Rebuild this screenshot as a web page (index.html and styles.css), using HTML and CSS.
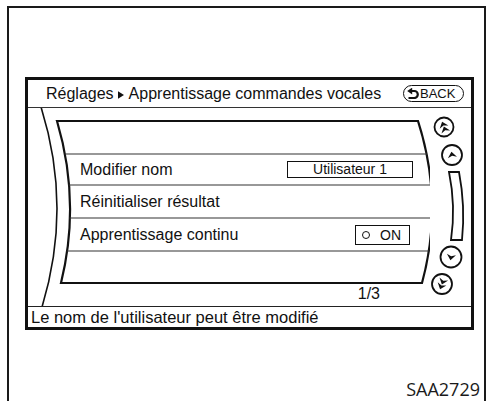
FILE: index.html
```html
<!DOCTYPE html>
<html lang="fr">
<head>
<meta charset="utf-8">
<title>Réglages</title>
<link rel="stylesheet" href="styles.css">
</head>
<body>
<div class="frame">
  <div class="screen">
    <div class="header">
      <div class="title">Réglages<svg class="tri" width="6" height="8" viewBox="0 0 6 8"><path d="M0 0.3 L6 4 L0 7.7 Z"/></svg>Apprentissage commandes vocales</div>
      <div class="back">
        <svg class="back-icon" width="12" height="11" viewBox="0 0 12 11"><path d="M0.2 3 L5.2 -0.4 L5.2 6.4 Z" fill="#111"/><path d="M4 3 H7.3 A3.5 3.5 0 0 1 7.3 10 H1.5" stroke="#111" stroke-width="2.2" fill="none"/></svg>
        <span>BACK</span>
      </div>
    </div>
    <div class="body">
      <div class="panel">
        <svg class="panel-lines" width="402" height="198" viewBox="0 0 402 198">
          <path d="M13 -1 Q44.5 99 14 199" fill="none" stroke="#111" stroke-width="1.6"/>
          <path d="M29 13 L390 13 Q416 94 394 175 L33 175 Q53 94 29 13 Z" fill="none" stroke="#111" stroke-width="2.2"/>
          <g stroke="#333" stroke-width="1.2">
            <line x1="36.5" y1="46" x2="399" y2="46"/>
            <line x1="40.5" y1="77" x2="403.5" y2="77"/>
            <line x1="41.5" y1="110" x2="404.5" y2="110"/>
            <line x1="38.5" y1="143" x2="401.5" y2="143"/>
          </g>
        </svg>
        <div class="rows">
          <div class="row row-first">
            <span>Modifier nom</span>
            <span class="field">Utilisateur 1</span>
          </div>
          <div class="row">
            <span>Réinitialiser résultat</span>
          </div>
          <div class="row">
            <span>Apprentissage continu</span>
            <span class="toggle"><i class="dot"></i>ON</span>
          </div>
        </div>
        <div class="pager">1/3</div>
      </div>
      <svg class="scroll" width="41" height="198" viewBox="0 0 41 198">
        <defs>
          <path id="ah" d="M-4.6 2.5 L0 -3.2 L4.6 2.5 L0 0.7 Z"/>
        </defs>
        <g fill="none" stroke="#111" stroke-width="1.8">
          <circle cx="14" cy="19" r="9.5"/>
          <circle cx="22" cy="47" r="10"/>
          <path d="M19 64 L29 64 Q35.5 98 32 132 L21 132 Q26 98 19 64 Z"/>
          <circle cx="21" cy="149" r="10.5"/>
          <circle cx="12" cy="176" r="10"/>
        </g>
        <g fill="#111">
          <g transform="translate(14 19) rotate(-20)">
            <use href="#ah" y="-2.4"/>
            <use href="#ah" y="2.8"/>
          </g>
          <g transform="translate(22 47) rotate(-10)">
            <use href="#ah"/>
          </g>
          <g transform="translate(21 149) rotate(190)">
            <use href="#ah"/>
          </g>
          <g transform="translate(12 176) rotate(200)">
            <use href="#ah" y="-2.4"/>
            <use href="#ah" y="2.8"/>
          </g>
        </g>
      </svg>
    </div>
    <div class="status">Le nom de l'utilisateur peut être modifié</div>
  </div>
  <div class="code">SAA2729</div>
</div>
</body>
</html>
```
FILE: styles.css
```css
html, body {
  margin: 0;
  padding: 0;
  background: #fff;
}

body {
  width: 487px;
  height: 401px;
  overflow: hidden;
  font-family: "Liberation Sans", Arial, sans-serif;
  color: #111;
}

.frame {
  margin: 6px 0 0 7px;
  width: 479px;
  height: 400px;
  box-sizing: border-box;
  border: 2px solid #1a1a1a;
  border-bottom: none;
}

.screen {
  margin: 69px 0 0 16px;
  width: 449px;
  box-sizing: border-box;
  border: 3px solid #111;
  background: #fff;
}

.header {
  height: 27px;
  border-bottom: 1px solid #333;
  display: flex;
  align-items: center;
  justify-content: space-between;
  padding: 0 7px 0 18px;
}

.title {
  font-size: 16px;
  line-height: 27px;
  white-space: nowrap;
}

.tri {
  margin: 0 5px 0 4px;
  vertical-align: 0;
  fill: #111;
}

.back {
  height: 17px;
  width: 61px;
  box-sizing: border-box;
  border: 1.8px solid #111;
  border-radius: 9px;
  display: flex;
  align-items: center;
  gap: 1px;
  padding-left: 3px;
  font-size: 13px;
  line-height: 14px;
}

.back-icon {
  display: block;
  flex: none;
}

.body {
  display: flex;
  height: 198px;
}

.panel {
  position: relative;
  width: 402px;
  flex: none;
}

.panel-lines {
  position: absolute;
  left: 0;
  top: 0;
}

.rows {
  position: relative;
  padding: 46px 17px 0 52px;
}

.row {
  display: flex;
  align-items: center;
  justify-content: space-between;
  height: 33px;
  font-size: 16px;
}

.row-first {
  height: 31px;
}

.field {
  width: 126px;
  height: 17px;
  box-sizing: border-box;
  border: 1.5px solid #111;
  font-size: 14px;
  line-height: 14px;
  text-align: center;
}

.toggle {
  width: 55px;
  height: 20px;
  box-sizing: border-box;
  border: 1.5px solid #111;
  margin-right: 3px;
  padding-left: 6px;
  display: flex;
  align-items: center;
  font-size: 14px;
}

.dot {
  width: 8px;
  height: 8px;
  box-sizing: border-box;
  border: 1.6px solid #111;
  border-radius: 50%;
  margin-right: 10px;
}

.pager {
  position: relative;
  margin-top: 33px;
  line-height: 20px;
  font-size: 16px;
  text-align: right;
  padding-right: 50px;
}

.scroll {
  display: block;
  flex: none;
}

.status {
  border-top: 1px solid #222;
  height: 20px;
  line-height: 20px;
  font-size: 16.5px;
  padding-left: 3px;
  white-space: nowrap;
}

.code {
  margin-top: 50px;
  padding-right: 4px;
  text-align: right;
  font-family: "Open Sans", "Noto Sans", sans-serif;
  font-size: 18px;
  line-height: 18px;
  color: #1a1a1a;
}
```
